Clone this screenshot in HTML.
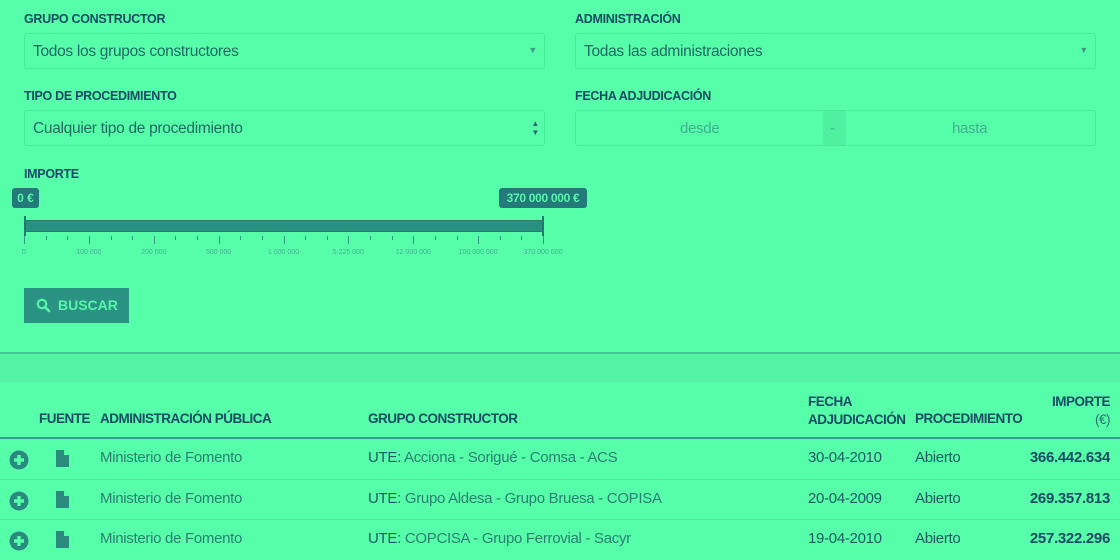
<!DOCTYPE html>
<html><head><meta charset="utf-8"><style>
*{margin:0;padding:0;box-sizing:border-box}
body{width:1120px;height:560px;background:#56fea9;font-family:"Liberation Sans",sans-serif;position:relative;overflow:hidden;color:#1d4d62}
.a{position:absolute;white-space:nowrap}
.lbl{font-size:12.5px;font-weight:bold;color:#1c4a66;letter-spacing:-0.3px}
.inp{position:absolute;border:1px solid #47e89a;border-radius:3px;height:36px;font-size:15.5px;color:#226a64;padding:9px 8px;letter-spacing:-0.3px}
.tick{position:absolute;top:236px;width:1px;background:#2e9a84}
.tl{position:absolute;top:249px;font-size:7px;color:#3fb190;transform:translateX(-50%)}
.th{font-size:13.5px;font-weight:bold;color:#1c4a66;letter-spacing:-0.5px}
.td{font-size:15px;color:#2b7f74;letter-spacing:-0.3px}
.dk{color:#1f5a66}
.row{position:absolute;left:0;width:1120px;height:1px;background:#4fec9e}
</style></head><body>
<div class="a lbl" style="left:24px;top:12px">GRUPO CONSTRUCTOR</div>
<div class="inp" style="left:24px;top:33px;width:521px">Todos los grupos constructores<span style="position:absolute;right:7px;top:11px;font-size:9px;color:#3a9a88">▼</span></div>
<div class="a lbl" style="left:575px;top:12px">ADMINISTRACIÓN</div>
<div class="inp" style="left:575px;top:33px;width:521px">Todas las administraciones<span style="position:absolute;right:7px;top:11px;font-size:9px;color:#3a9a88">▼</span></div>
<div class="a lbl" style="left:24px;top:89px">TIPO DE PROCEDIMIENTO</div>
<div class="inp" style="left:24px;top:110px;width:521px">Cualquier tipo de procedimiento<span style="position:absolute;right:5px;top:8px;font-size:8px;line-height:9px;color:#2a6a70">▲<br>▼</span></div>
<div class="a lbl" style="left:575px;top:89px">FECHA ADJUDICACIÓN</div>
<div class="inp" style="left:575px;top:110px;width:521px;padding:0"></div>
<div class="a" style="left:823px;top:111px;width:23px;height:34px;background:#4ff0a0"></div>
<div class="a td" style="left:680px;top:120px;color:#3eb092">desde</div>
<div class="a td" style="left:830px;top:120px;color:#3eb092">-</div>
<div class="a td" style="left:952px;top:120px;color:#3eb092">hasta</div>
<div class="a lbl" style="left:24px;top:167px">IMPORTE</div>
<div class="a" style="left:12px;top:188px;width:27px;height:20px;background:#247a7a;border-radius:3px;color:#58f5a8;font-size:12px;font-weight:bold;text-align:center;line-height:20px">0 €</div>
<div class="a" style="left:499px;top:188px;width:88px;height:20px;background:#247a7a;border-radius:3px;color:#58f5a8;font-size:12px;font-weight:bold;text-align:center;line-height:20px;letter-spacing:-0.3px">370 000 000 €</div>
<div class="a" style="left:24px;top:220px;width:520px;height:12px;background:#2a9082;border:1px solid #23806f"></div>
<div class="a" style="left:24px;top:216px;width:2px;height:20px;background:#217a6e"></div>
<div class="a" style="left:542px;top:216px;width:2px;height:20px;background:#217a6e"></div>
<div id="ticks"></div>
<div class="a" style="left:24px;top:288px;width:105px;height:35px;background:#2a9384;color:#58f5a8;font-size:14px;font-weight:bold;line-height:35px;padding-left:34px">BUSCAR
<svg style="position:absolute;left:12px;top:10px" width="15" height="15" viewBox="0 0 15 15"><circle cx="6" cy="6" r="4.2" fill="none" stroke="#58f5a8" stroke-width="2.2"/><path d="M9 9L13 13" stroke="#58f5a8" stroke-width="2.6" stroke-linecap="round"/></svg></div>
<div class="a" style="left:0;top:352px;width:1120px;height:2px;background:#46c896"></div>
<div class="a" style="left:0;top:354px;width:1120px;height:28px;background:#52f4a3"></div>
<div class="a th" style="left:39px;top:411px">FUENTE</div>
<div class="a th" style="left:100px;top:411px">ADMINISTRACIÓN PÚBLICA</div>
<div class="a th" style="left:368px;top:411px">GRUPO CONSTRUCTOR</div>
<div class="a th" style="left:808px;top:393px;line-height:18px">FECHA<br>ADJUDICACIÓN</div>
<div class="a th" style="left:915px;top:411px">PROCEDIMIENTO</div>
<div class="a th" style="right:10px;top:393px;line-height:18px;text-align:right">IMPORTE<br><span style="font-weight:normal;color:#2b6f70">(€)</span></div>
<div class="a" style="left:0;top:437px;width:1120px;height:2px;background:#3a9a92"></div>
<div class="row" style="top:479px"></div><div class="row" style="top:519px"></div>
<div id="rows"></div>
<script>
var t=document.getElementById('ticks'),h='';
var labs=['0','100 000','200 000','500 000','1 000 000','5 225 000','12 000 000','100 000 000','370 000 000'];
for(var i=0;i<=24;i++){var x=24+i*(519/24);var big=i%3==0;h+='<div class="tick" style="left:'+x+'px;height:'+(big?8:4)+'px"></div>';}
for(var j=0;j<9;j++){h+='<div class="tl" style="left:'+(24+j*(519/8))+'px">'+labs[j]+'</div>';}
t.innerHTML=h;
var d=[['UTE: ','Acciona - Sorigué - Comsa - ACS','30-04-2010','366.442.634'],['UTE: ','Grupo Aldesa - Grupo Bruesa - COPISA','20-04-2009','269.357.813'],['UTE: ','COPCISA - Grupo Ferrovial - Sacyr','19-04-2010','257.322.296']];
var r='';
for(var k=0;k<3;k++){var y=449+k*40.5;
r+='<svg class="a" style="left:9px;top:'+(y+1)+'px" width="20" height="20" viewBox="0 0 20 20"><circle cx="10" cy="10" r="9.5" fill="#2b8a80"/><path d="M10 5v10M5 10h10" stroke="#56fea9" stroke-width="3.4"/></svg>';
r+='<svg class="a" style="left:56px;top:'+(y+1)+'px" width="14" height="17" viewBox="0 0 14 17"><path d="M0 0h8l5 5v12H0z" fill="#2b8a80"/><path d="M8 0v5h5" fill="#56fea9"/></svg>';
r+='<div class="a td" style="left:100px;top:'+y+'px">Ministerio de Fomento</div>';
r+='<div class="a td" style="left:368px;top:'+y+'px"><span class="dk">'+d[k][0]+'</span>'+d[k][1]+'</div>';
r+='<div class="a td dk" style="left:808px;top:'+y+'px">'+d[k][2]+'</div>';
r+='<div class="a td dk" style="left:915px;top:'+y+'px">Abierto</div>';
r+='<div class="a td" style="right:10px;top:'+y+'px;font-weight:bold;color:#1c4a66">'+d[k][3]+'</div>';}
document.getElementById('rows').innerHTML=r;
</script>
</body></html>
